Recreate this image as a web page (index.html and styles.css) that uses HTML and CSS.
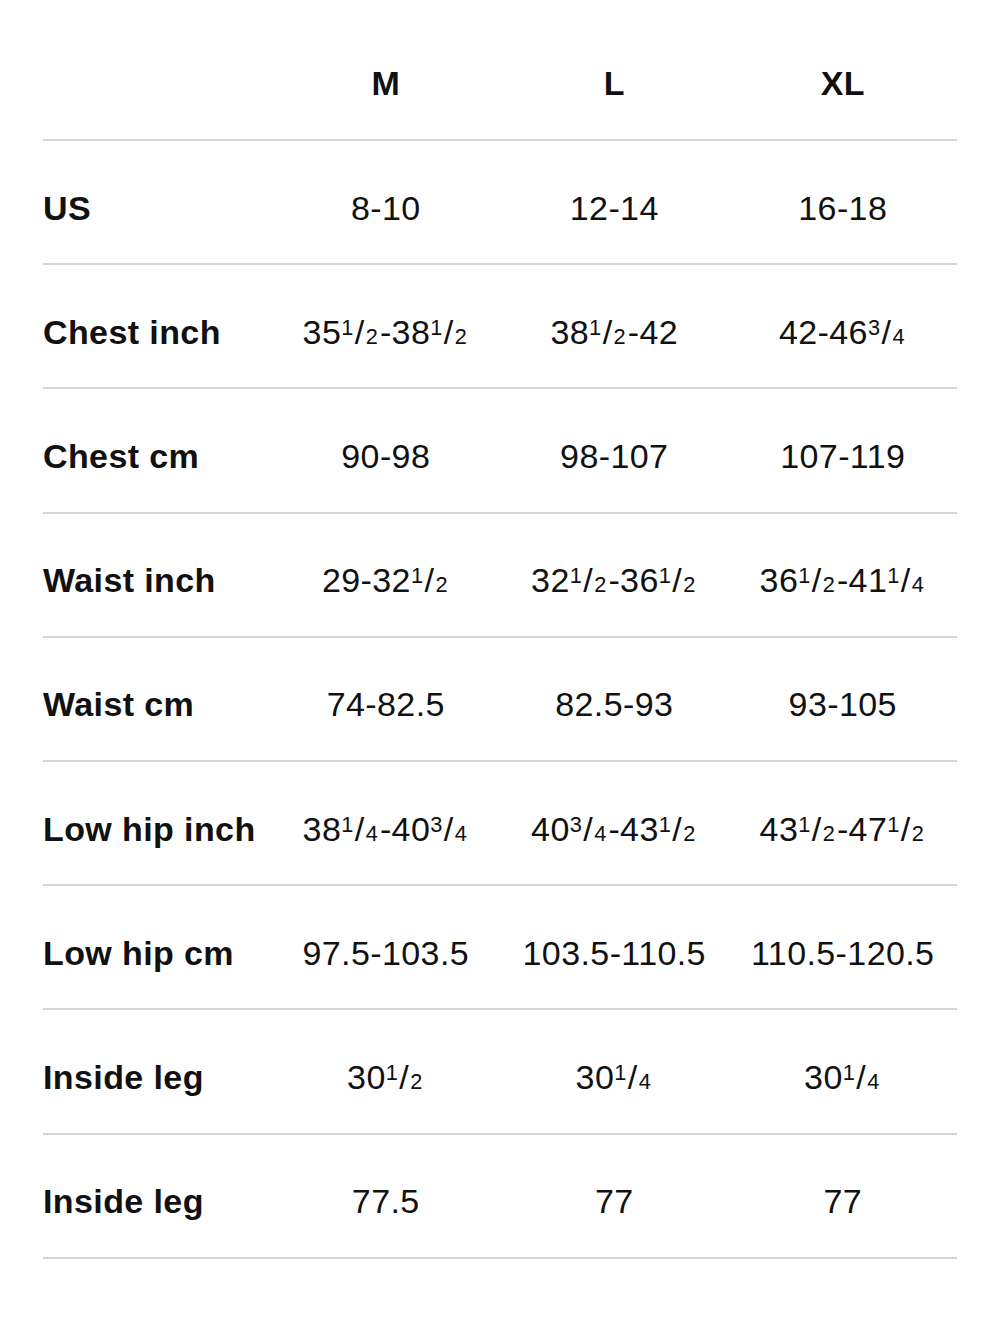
FILE: index.html
```html
<!DOCTYPE html>
<html lang="en">
<head>
<meta charset="utf-8">
<title>Size chart</title>
<link rel="stylesheet" href="styles.css">
</head>
<body>
<div class="chart">
  <div class="row head">
    <div class="cell label"></div>
    <div class="cell">M</div>
    <div class="cell">L</div>
    <div class="cell">XL</div>
  </div>
  <div class="row"><div class="cell label">US</div><div class="cell">8-10</div><div class="cell">12-14</div><div class="cell">16-18</div></div>
  <div class="row"><div class="cell label">Chest inch</div><div class="cell">35<span class="frac"><span class="n">1</span><span class="s">/</span><span class="d">2</span></span>-38<span class="frac"><span class="n">1</span><span class="s">/</span><span class="d">2</span></span></div><div class="cell">38<span class="frac"><span class="n">1</span><span class="s">/</span><span class="d">2</span></span>-42</div><div class="cell">42-46<span class="frac"><span class="n">3</span><span class="s">/</span><span class="d">4</span></span></div></div>
  <div class="row"><div class="cell label">Chest cm</div><div class="cell">90-98</div><div class="cell">98-107</div><div class="cell">107-119</div></div>
  <div class="row"><div class="cell label">Waist inch</div><div class="cell">29-32<span class="frac"><span class="n">1</span><span class="s">/</span><span class="d">2</span></span></div><div class="cell">32<span class="frac"><span class="n">1</span><span class="s">/</span><span class="d">2</span></span>-36<span class="frac"><span class="n">1</span><span class="s">/</span><span class="d">2</span></span></div><div class="cell">36<span class="frac"><span class="n">1</span><span class="s">/</span><span class="d">2</span></span>-41<span class="frac"><span class="n">1</span><span class="s">/</span><span class="d">4</span></span></div></div>
  <div class="row"><div class="cell label">Waist cm</div><div class="cell">74-82.5</div><div class="cell">82.5-93</div><div class="cell">93-105</div></div>
  <div class="row"><div class="cell label">Low hip inch</div><div class="cell">38<span class="frac"><span class="n">1</span><span class="s">/</span><span class="d">4</span></span>-40<span class="frac"><span class="n">3</span><span class="s">/</span><span class="d">4</span></span></div><div class="cell">40<span class="frac"><span class="n">3</span><span class="s">/</span><span class="d">4</span></span>-43<span class="frac"><span class="n">1</span><span class="s">/</span><span class="d">2</span></span></div><div class="cell">43<span class="frac"><span class="n">1</span><span class="s">/</span><span class="d">2</span></span>-47<span class="frac"><span class="n">1</span><span class="s">/</span><span class="d">2</span></span></div></div>
  <div class="row"><div class="cell label">Low hip cm</div><div class="cell">97.5-103.5</div><div class="cell">103.5-110.5</div><div class="cell">110.5-120.5</div></div>
  <div class="row"><div class="cell label">Inside leg</div><div class="cell">30<span class="frac"><span class="n">1</span><span class="s">/</span><span class="d">2</span></span></div><div class="cell">30<span class="frac"><span class="n">1</span><span class="s">/</span><span class="d">4</span></span></div><div class="cell">30<span class="frac"><span class="n">1</span><span class="s">/</span><span class="d">4</span></span></div></div>
  <div class="row"><div class="cell label">Inside leg</div><div class="cell">77.5</div><div class="cell">77</div><div class="cell">77</div></div>
</div>
</body>
</html>
```
FILE: styles.css
```css
html, body {
  margin: 0;
  padding: 0;
  background: #ffffff;
}
body {
  font-family: "Liberation Sans", Arial, sans-serif;
  color: #111111;
}
.chart {
  margin: 0 43px;
  width: 914px;
}
.row {
  display: grid;
  grid-template-columns: repeat(4, 1fr);
  align-items: center;
  height: 124.2px;
  box-sizing: border-box;
  padding-top: 11px;
  border-bottom: 2px solid #d6d6d6;
}
.row.head {
  height: 141px;
  padding-top: 26px;
}
.cell {
  font-size: 34px;
  line-height: 40px;
  letter-spacing: 0.4px;
  text-align: center;
  white-space: nowrap;
}
.cell.label {
  text-align: left;
  font-weight: 700;
}
.head .cell {
  font-weight: 700;
}
.frac {
  letter-spacing: 0;
  margin: 0 2px 0 0;
}
.frac .n,
.frac .d {
  font-size: 0.64em;
  line-height: 0;
}
.frac .n {
  vertical-align: 0.43em;
}
.frac .s {
  display: inline-block;
  line-height: 0;
  margin: 0 1.5px;
}
```
